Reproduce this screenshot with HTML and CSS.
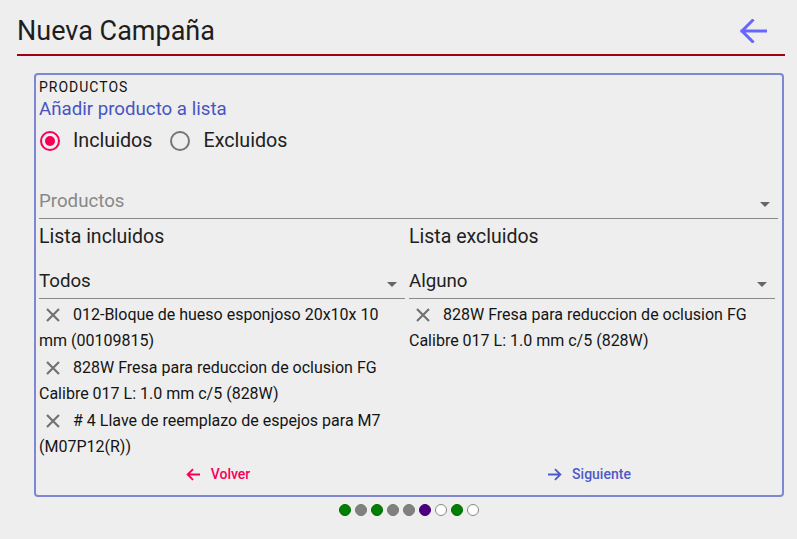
FILE: index.html
```html
<!DOCTYPE html>
<html lang="es">
<head>
<meta charset="utf-8">
<title>Nueva Campaña</title>
<link rel="stylesheet" href="styles.css">
</head>
<body>
<header class="topbar">
  <h1 class="title">Nueva Campaña</h1>
  <svg class="back" viewBox="0 0 28 24" width="28" height="24" aria-hidden="true">
    <path d="M27 12H3 M13.5 1.5 L3 12 L13.5 22.5" fill="none" stroke="#6666ff" stroke-width="3" stroke-linecap="square" stroke-linejoin="miter"/>
  </svg>
</header>

<main class="wrap">
  <section class="card">
    <div class="section-label">PRODUCTOS</div>
    <div class="link">Añadir producto a lista</div>

    <div class="radios">
      <label class="radio"><span class="radio-dot checked"></span><span>Incluidos</span></label>
      <label class="radio"><span class="radio-dot"></span><span>Excluidos</span></label>
    </div>

    <div class="select wide">
      <span class="placeholder">Productos</span>
      <span class="caret"></span>
    </div>

    <div class="lists">
      <div class="list-title">Lista incluidos</div>
      <div class="list-title">Lista excluidos</div>

      <div class="select"><span>Todos</span><span class="caret"></span></div>
      <div class="select"><span>Alguno</span><span class="caret"></span></div>

      <ul class="items">
        <li><svg class="x" viewBox="0 0 14 14" width="14" height="14"><path d="M1 1L13 13M13 1L1 13" stroke="#727272" stroke-width="2.2"/></svg>012-Bloque de hueso esponjoso 20x10x 10 mm (00109815)</li>
        <li><svg class="x" viewBox="0 0 14 14" width="14" height="14"><path d="M1 1L13 13M13 1L1 13" stroke="#727272" stroke-width="2.2"/></svg>828W Fresa para reduccion de oclusion FG Calibre 017 L: 1.0 mm c/5 (828W)</li>
        <li><svg class="x" viewBox="0 0 14 14" width="14" height="14"><path d="M1 1L13 13M13 1L1 13" stroke="#727272" stroke-width="2.2"/></svg># 4 Llave de reemplazo de espejos para M7 (M07P12(R))</li>
      </ul>
      <ul class="items">
        <li><svg class="x" viewBox="0 0 14 14" width="14" height="14"><path d="M1 1L13 13M13 1L1 13" stroke="#727272" stroke-width="2.2"/></svg>828W Fresa para reduccion de oclusion FG Calibre 017 L: 1.0 mm c/5 (828W)</li>
      </ul>

      <div class="btn-cell">
        <button class="btn btn-back" type="button">
          <svg viewBox="0 0 16 14" width="15" height="13"><path d="M15 7H2 M7.5 1.2 L1.7 7 L7.5 12.8" fill="none" stroke="currentColor" stroke-width="2"/></svg>
          <span>Volver</span>
        </button>
      </div>
      <div class="btn-cell">
        <button class="btn btn-next" type="button">
          <svg viewBox="0 0 16 14" width="15" height="13"><path d="M1 7H14 M8.5 1.2 L14.3 7 L8.5 12.8" fill="none" stroke="currentColor" stroke-width="2"/></svg>
          <span>Siguiente</span>
        </button>
      </div>
    </div>
  </section>

  <div class="steps">
    <span class="dot green"></span>
    <span class="dot gray"></span>
    <span class="dot green"></span>
    <span class="dot gray"></span>
    <span class="dot gray"></span>
    <span class="dot purple"></span>
    <span class="dot white"></span>
    <span class="dot green"></span>
    <span class="dot white"></span>
  </div>
</main>
</body>
</html>
```

FILE: styles.css
```css
* { box-sizing: border-box; }

html, body {
  margin: 0;
  padding: 0;
  background: #eeeeee;
  font-family: Roboto, "Liberation Sans", Arial, sans-serif;
  color: #212121;
}

.topbar {
  display: flex;
  justify-content: space-between;
  align-items: flex-start;
  margin: 0 12px 0 17px;
  padding: 15px 0 7px 0;
  border-bottom: 2px solid #a0000f;
}

.title {
  margin: 0;
  font-size: 27px;
  font-weight: 400;
  line-height: 32px;
  color: #1e1e1e;
}

.back {
  display: block;
  margin: 4px 18px 0 0;
}

.wrap {
  padding: 17px 13px 0 34px;
}

.card {
  border: 2px solid #7d88d0;
  border-radius: 4px;
  padding: 4px 4px 7px 3px;
}

.section-label {
  font-size: 14px;
  line-height: 16px;
  letter-spacing: 1px;
  color: #111;
}

.link {
  margin-top: 4px;
  font-size: 18.7px;
  line-height: 20px;
  color: #4655c2;
}

.radios {
  display: flex;
  align-items: center;
  gap: 18px;
  height: 44px;
  padding-left: 1px;
}

.radio {
  display: flex;
  align-items: center;
  gap: 13px;
  font-size: 19.7px;
  line-height: 20px;
  color: #212121;
}

.radio-dot {
  width: 20px;
  height: 20px;
  border-radius: 50%;
  border: 2px solid #757575;
  display: flex;
  align-items: center;
  justify-content: center;
}

.radio-dot.checked {
  border-color: #f50057;
}

.radio-dot.checked::after {
  content: "";
  width: 10px;
  height: 10px;
  border-radius: 50%;
  background: #f50057;
}

.select {
  display: flex;
  justify-content: space-between;
  align-items: flex-end;
  padding-bottom: 7px;
  border-bottom: 1px solid #8a8a8a;
  font-size: 18.7px;
  line-height: 20px;
  color: #212121;
}

.select.wide {
  margin-top: 28px;
}

.placeholder {
  color: #888;
}

.caret {
  width: 0;
  height: 0;
  border-left: 5px solid transparent;
  border-right: 5px solid transparent;
  border-top: 5px solid #666;
  margin: 0 8px 4px 0;
}

.lists {
  display: grid;
  grid-template-columns: 1fr 1fr;
  column-gap: 4px;
  padding-right: 3px;
}

.list-title {
  margin-top: 8px;
  font-size: 19.5px;
  line-height: 20px;
  color: #212121;
}

.lists .select {
  margin-top: 24px;
}

.items {
  list-style: none;
  margin: 3px 0 0 0;
  padding: 0 6px 0 0;
  font-size: 16px;
  line-height: 26.4px;
  color: #141414;
}

.items li {
  margin: 0;
}

.x {
  display: inline-block;
  vertical-align: -2px;
  margin: 0 13px 0 7px;
}

.btn-cell {
  display: flex;
  justify-content: center;
  height: 28px;
}

.btn {
  display: flex;
  align-items: center;
  gap: 10px;
  border: 0;
  background: transparent;
  padding: 0 4px;
  font-family: inherit;
  font-size: 14px;
  font-weight: 500;
  line-height: 28px;
  cursor: pointer;
}

.btn svg {
  display: block;
}

.btn-back {
  color: #f50057;
  margin-right: 8px;
}

.btn-next {
  color: #4e5ac8;
  margin-right: 6px;
}

.steps {
  display: flex;
  justify-content: center;
  gap: 4px;
  margin-top: 7px;
}

.dot {
  width: 12px;
  height: 12px;
  border-radius: 50%;
  border: 1px solid;
}

.dot.green { background: #008000; border-color: #006a00; }
.dot.gray { background: #808080; border-color: #777; }
.dot.purple { background: #4b0082; border-color: #3f006e; }
.dot.white { background: #ffffff; border-color: #888; }
```
